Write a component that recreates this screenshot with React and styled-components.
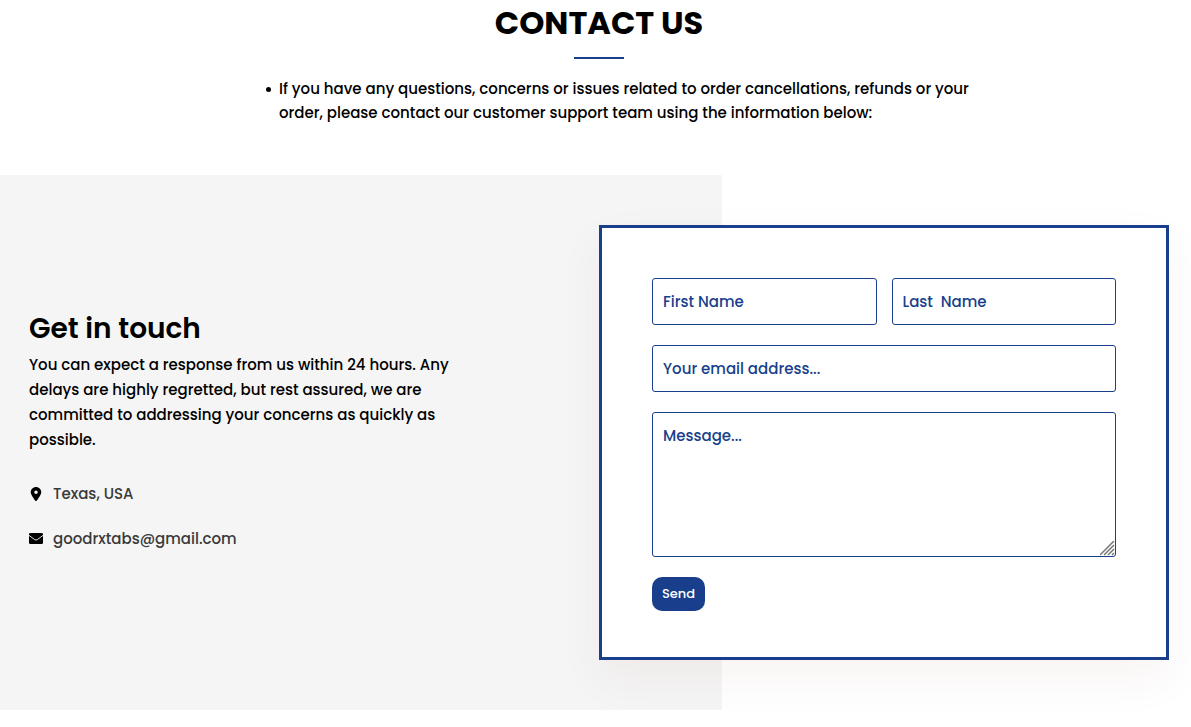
import React from 'react';
import styled, { createGlobalStyle } from 'styled-components';
import { FaLocationDot } from 'react-icons/fa6';

const Envelope = ({ className }) => (
    <svg className={className} width="14" height="11" viewBox="0 0 14 11" aria-hidden="true">
        <rect width="14" height="11" rx="1.3" fill="currentColor" />
        <path d="M0 2.4L5.8 6.7Q7 7.5 8.2 6.7L14 2.4" fill="none" stroke="#f5f5f5" strokeWidth="0.9" />
    </svg>
);

const App = () => {
    return (
        <>
            <GlobalStyle />
            <Header>
                <Title>CONTACT US</Title>
                <Underline />
                <Intro>
                    <IntroItem>
                        If you have any questions, concerns or issues related to order cancellations, refunds or your
                        order, please contact our customer support team using the information below:
                    </IntroItem>
                </Intro>
            </Header>
            <Section>
                <Backdrop />
                <Content>
                    <Info>
                        <Subtitle>Get in touch</Subtitle>
                        <Paragraph>
                            You can expect a response from us within 24 hours. Any delays are highly regretted, but
                            rest assured, we are committed to addressing your concerns as quickly as possible.
                        </Paragraph>
                        <Details>
                            <Detail>
                                <IconBox><FaLocationDot /></IconBox>
                                <span>Texas, USA</span>
                            </Detail>
                            <Detail>
                                <IconBox><EnvelopeIcon /></IconBox>
                                <DetailLink href="mailto:goodrxtabs@gmail.com">goodrxtabs@gmail.com</DetailLink>
                            </Detail>
                        </Details>
                    </Info>
                    <Form onSubmit={(e) => e.preventDefault()}>
                        <Line>
                            <Input type="text" name="firstName" placeholder="First Name" aria-label="First Name" />
                            <Input type="text" name="lastName" placeholder="Last  Name" aria-label="Last Name" />
                        </Line>
                        <Input type="email" name="email" placeholder="Your email address..." aria-label="Your email address" />
                        <Message name="message" placeholder="Message..." aria-label="Message" />
                        <Button type="submit">Send</Button>
                    </Form>
                </Content>
            </Section>
        </>
    );
}

export default App;

const GlobalStyle = createGlobalStyle`
    * {
        box-sizing: border-box;
    }

    body {
        margin: 0;
        background: white;
        color: black;
        font-family: Poppins, Inter, sans-serif;
        font-size: 15px;
        font-weight: 500;
    }
`;

const Header = styled.header`
    display: flex;
    flex-direction: column;
    align-items: center;
    padding: 2px 0 50px 7px;
`;

const Title = styled.h1`
    margin: 0;
    font-size: 32px;
    font-weight: 700;
    line-height: 42px;
`;

const Underline = styled.div`
    width: 50px;
    height: 2px;
    margin: 13px 0 18px;
    background: #193f8c;
`;

const Intro = styled.ul`
    max-width: 714px;
    margin: 0 0 0 46px;
    padding: 0;
    line-height: 24px;
    list-style: none;
`;

const IntroItem = styled.li`
    display: flex;
    gap: 8px;

    &::before {
        content: '';
        flex: none;
        width: 5px;
        height: 5px;
        margin: 10px 0 0 1px;
        border-radius: 50%;
        background: black;
    }
`;

const Section = styled.section`
    display: grid;
    grid-template-columns: 60.6% 1fr;
`;

const Backdrop = styled.div`
    grid-area: 1 / 1 / 2 / 2;
    background: #f5f5f5;
`;

const Content = styled.div`
    grid-area: 1 / 1 / 2 / 3;
    display: grid;
    grid-template-columns: 1fr 1fr;
    align-items: center;
    padding: 50px 22px 50px 29px;
`;

const Info = styled.div`
    max-width: 440px;
    padding-bottom: 26px;
`;

const Subtitle = styled.h2`
    margin: 0 0 2px;
    font-size: 28px;
    font-weight: 600;
    line-height: 42px;
`;

const Paragraph = styled.p`
    margin: 0;
    line-height: 25px;
`;

const Details = styled.ul`
    display: flex;
    flex-direction: column;
    gap: 21px;
    margin: 30px 0 0;
    padding: 0;
    list-style: none;
`;

const Detail = styled.li`
    display: flex;
    align-items: center;
    gap: 10px;
    color: #3a3a3a;
    line-height: 24px;
`;

const IconBox = styled.span`
    display: flex;
    justify-content: center;
    width: 14px;
    color: black;
    font-size: 14px;
`;

const EnvelopeIcon = styled(Envelope)`
    margin-bottom: 2px;
`;

const DetailLink = styled.a`
    color: inherit;
    text-decoration: none;
`;

const Form = styled.form`
    display: flex;
    flex-direction: column;
    align-items: flex-start;
    gap: 20px;
    padding: 50px 50px 46px;
    border: 3px solid #193f8c;
    background: white;
    box-shadow: 0 18px 44px rgba(110, 40, 10, 0.05);
`;

const Line = styled.div`
    display: flex;
    gap: 15px;
    width: 100%;
`;

const Input = styled.input`
    width: 100%;
    min-width: 0;
    height: 47px;
    padding: 10px;
    border: 1px solid #193f8c;
    border-radius: 3px;
    background: white;
    color: #193f8c;
    font: inherit;

    &::placeholder {
        color: #193f8c;
        opacity: 1;
    }
`;

const Message = styled(Input).attrs({ as: 'textarea' })`
    display: block;
    height: 145px;
    line-height: 26px;
    resize: both;

    &::-webkit-resizer {
        background: url("data:image/svg+xml,%3Csvg xmlns='http://www.w3.org/2000/svg' width='15' height='15'%3E%3Cpath d='M0 14L14 0M4 14L14 4M8 14L14 8M12 14L14 12' stroke='%23777' stroke-width='1.5'/%3E%3C/svg%3E") no-repeat right bottom;
    }
`;

const Button = styled.button`
    height: 34px;
    padding: 0 10px;
    border: none;
    border-radius: 10px;
    background: #193f8c;
    color: white;
    font: inherit;
    font-size: 13px;
    cursor: pointer;
`;
